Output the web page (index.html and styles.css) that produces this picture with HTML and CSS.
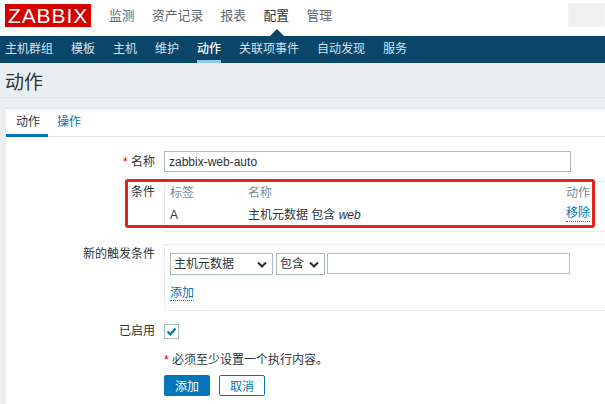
FILE: index.html
```html
<!DOCTYPE html>
<html lang="zh">
<head>
<meta charset="utf-8">
<title>动作</title>
<link rel="stylesheet" href="styles.css">
</head>
<body>
<header class="top">
  <div class="logo">ZABBIX</div>
  <nav class="main-nav">
    <a>监测</a><a>资产记录</a><a>报表</a><a class="current">配置</a><a>管理</a>
  </nav>
  <div class="search"></div>
</header>
<nav class="sub-nav">
  <a>主机群组</a><a>模板</a><a>主机</a><a>维护</a><a class="active">动作</a><a>关联项事件</a><a>自动发现</a><a>服务</a>
</nav>
<main class="page">
  <h1 class="title">动作</h1>
  <section class="panel">
    <div class="tabs"><a class="tab on">动作</a><a class="tab">操作</a></div>
    <div class="form">
      <div class="row row-name">
        <label class="lbl"><span class="req">*</span> 名称</label>
        <input class="text name" value="zabbix-web-auto">
      </div>
      <div class="row row-cond">
        <label class="lbl">条件</label>
        <div class="box cond">
          <div class="cond-row head"><span class="c1">标签</span><span class="c2">名称</span><span class="c3">动作</span></div>
          <div class="cond-row"><span class="c1">A</span><span class="c2">主机元数据 包含 <i>web</i></span><a class="c3 link">移除</a></div>
        </div>
      </div>
      <div class="row row-new">
        <label class="lbl">新的触发条件</label>
        <div class="box new">
          <div class="controls">
            <div class="sel sel-a">主机元数据<svg class="chev" viewBox="0 0 10 7"><path d="M1 1.5 5 5.5 9 1.5" fill="none" stroke="#1f2c33" stroke-width="2"/></svg></div>
            <div class="sel sel-b">包含<svg class="chev" viewBox="0 0 10 7"><path d="M1 1.5 5 5.5 9 1.5" fill="none" stroke="#1f2c33" stroke-width="2"/></svg></div>
            <div class="text val"></div>
          </div>
          <a class="link add">添加</a>
        </div>
      </div>
      <div class="row row-on">
        <label class="lbl">已启用</label>
        <div class="check"><svg viewBox="0 0 13 13"><path d="M2.5 6.5 5.3 9.3 10.5 3.6" fill="none" stroke="#0275b8" stroke-width="2.2"/></svg></div>
      </div>
      <div class="row row-note">
        <span class="lbl"></span>
        <p class="note"><span class="req">*</span> 必须至少设置一个执行内容。</p>
      </div>
      <div class="row row-btn">
        <span class="lbl"></span>
        <div class="btns"><button class="btn primary">添加</button><button class="btn ghost">取消</button></div>
      </div>
    </div>
    <div class="mark"></div>
  </section>
</main>
</body>
</html>
```
FILE: styles.css
```css
* { box-sizing: border-box; }
html, body { margin: 0; height: 404px; overflow: hidden; }
body { font-family: "Liberation Sans", "Noto Sans CJK SC", sans-serif; font-size: 12px; color: #2b363c; background: #ebeef0; width: 605px; }
a { display: block; }
.top { height: 36px; background: #fff; display: flex; align-items: flex-start; position: relative; }
.logo { margin: 4px 0 0 5px; width: 86px; height: 23px; background: #d40000; color: #fff; font-size: 21px; line-height: 23px; text-align: center; letter-spacing: .9px; }
.main-nav { display: flex; gap: 17.4px; margin: 7px 0 0 18px; font-size: 12.8px; line-height: 17px; color: #5f6a70; }
.main-nav .current { color: #2b3338; position: relative; }
.main-nav .current::after { content: ""; position: absolute; left: 6px; top: 22px; border: 7px solid transparent; border-top: 0; border-bottom-color: #0a466a; }
.search { position: absolute; left: 568px; top: 3px; width: 37px; height: 24px; background: #f0f0f0; border: 1px solid #f4f4f4; }
.sub-nav { height: 27px; background: #0a466a; display: flex; gap: 18px; padding-left: 5px; color: #d4e3ec; line-height: 26px; }
.sub-nav .active { color: #fff; font-weight: 500; border-bottom: 3px solid #8ec8ea; height: 27px; }
.page { height: 341px; }
.title { margin: 0; height: 35px; padding-left: 5px; font-size: 19px; font-weight: 400; line-height: 40px; color: #2b3338; border-bottom: 1px solid #dfe4e7; }
.panel { margin: 10px 0 0 6px; background: #fff; border-top: 1px solid #dfe4e7; height: 296px; position: relative; }
.tabs { display: flex; height: 28px; border-bottom: 1px solid #e4e8ea; color: #0275b8; }
.tab { padding: 4px 10px 0; width: 42px; line-height: 19px; text-align: center; white-space: nowrap; }
.tab + .tab { width: auto; padding: 4px 0 0 9px; }
.tab.on { color: #2b363c; border-bottom: 3px solid #0275b8; height: 28px; }
.form { padding-top: 14px; }
.row { display: flex; gap: 9px; }
.lbl { width: 149px; flex: none; text-align: right; color: #2b3338; line-height: 15px; }
.req { color: #d40000; }
.row-name { height: 21px; align-items: center; }
.row-name .lbl { padding-top: 1px; }
.text { border: 1px solid #acbbbc; background: #fff; height: 21px; font: inherit; color: #2b363c; padding: 0 4px; }
.name { width: 407px; }
.box { border: 1px solid #ebeef0; border-right: 0; width: 441px; }
.row-cond { margin-top: 9px; }
.row-cond .lbl { padding-top: 4px; }
.cond { height: 51px; padding: 1px 15px 0 5px; }
.cond-row { display: flex; height: 21px; line-height: 20px; }
.cond-row.head { color: #768d99; height: 22px; }
.c1 { width: 78px; }
.c2 { flex: 1; }
.c2 i { font-family: "Liberation Sans", sans-serif; }
.link { color: #0275b8; }
.c3.link { border-bottom: 1px dotted #0275b8; height: 16px; line-height: 15px; margin-top: 1px; }
.row-new { margin-top: 12px; }
.row-new .lbl { padding-top: 3px; }
.new { height: 67px; padding: 8px 5px 0; }
.controls { display: flex; gap: 3px; height: 22px; }
.sel { height: 22px; border: 1px solid #acbbbc; padding: 0 2px 0 3px; line-height: 21px; display: flex; justify-content: space-between; align-items: center; }
.sel-a { width: 103px; }
.sel-b { width: 49px; }
.chev { width: 10px; height: 7px; flex: none; margin-right: 3px; }
.val { width: 243px; height: 21px; margin-left: -1px; }
.add { width: 24px; margin-top: 8px; padding-top: 3px; line-height: 15px; height: 18px; border-bottom: 1px dotted #0275b8; }
.row-on { margin-top: 13px; height: 15px; align-items: center; }
.check { width: 15px; height: 15px; border: 1px solid #acbbbc; }
.check svg { display: block; width: 13px; height: 13px; }
.row-note { margin-top: 14px; height: 15px; }
.note { margin: 0; line-height: 15px; }
.row-btn { margin-top: 7px; }
.btns { display: flex; gap: 9px; }
.btn { width: 46px; height: 21px; padding: 0; font: inherit; border-radius: 2px; border: 1px solid #0275b8; }
.primary { background: #0275b8; color: #fff; }
.ghost { background: #fff; color: #0275b8; }
.mark { position: absolute; left: 119px; top: 70px; width: 470px; height: 49px; border: 3px solid #e2231a; border-radius: 3px; pointer-events: none; }
```
